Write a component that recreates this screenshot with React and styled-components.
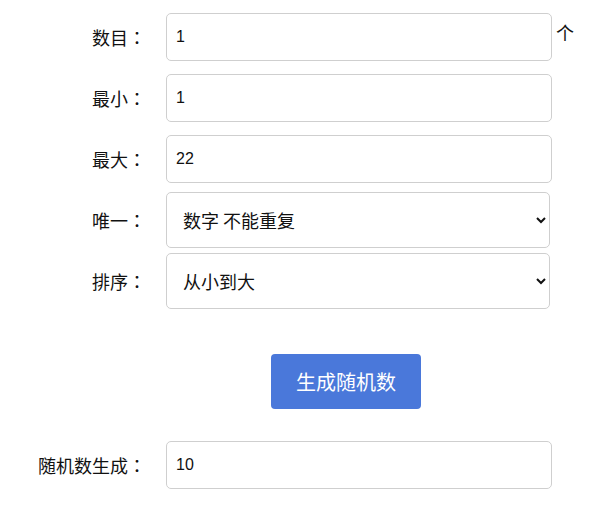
import React, { useState } from 'react';
import styled, { createGlobalStyle } from 'styled-components';

const GlobalStyle = createGlobalStyle`
  body {
    margin: 0;
    background: #fff;
    font-family: "Liberation Sans", "Noto Sans CJK SC", sans-serif;
    color: #111;
  }
`;

// Estilos
const Page = styled.div`
  width: 593px;
  padding-top: 13px;
`;

const Row = styled.div`
  display: flex;
  align-items: center;
  margin-top: ${props => props.$gap || 0}px;
`;

const Label = styled.label`
  width: 146px;
  flex: none;
  margin-right: 20px;
  text-align: right;
  font-family: "Noto Sans CJK TC", "Noto Sans CJK SC", sans-serif;
  font-size: 18px;
  color: #111;
`;

const Input = styled.input`
  box-sizing: border-box;
  width: 386px;
  height: 48px;
  padding: 0 9px;
  border: 1px solid #cfcfcf;
  border-radius: 5px;
  font-family: "Liberation Sans", sans-serif;
  font-size: 16px;
  color: #111;
  outline: none;

  &:focus {
    border-color: #9fb6ea;
  }
`;

const Select = styled.select`
  box-sizing: border-box;
  width: 384px;
  height: 56px;
  padding: 0 12px;
  border: 1px solid #cfcfcf;
  border-radius: 5px;
  background: #fff;
  font-family: "Noto Sans CJK SC", sans-serif;
  font-size: 18px;
  color: #111;
  outline: none;
`;

const Unit = styled.span`
  margin-left: 4px;
  align-self: flex-start;
  margin-top: 6px;
  font-family: "Noto Sans CJK SC", sans-serif;
  font-size: 18px;
  color: #111;
`;

const Button = styled.button`
  width: 150px;
  height: 55px;
  margin-left: 271px;
  border: none;
  border-radius: 4px;
  background: #4a78da;
  color: #fff;
  font-family: "Noto Sans CJK SC", sans-serif;
  font-size: 20px;
  cursor: pointer;

  &:hover {
    background: #3f6bcc;
  }
`;

const App = () => {
  const [count, setCount] = useState('1');
  const [min, setMin] = useState('1');
  const [max, setMax] = useState('22');
  const [unique, setUnique] = useState('no');
  const [order, setOrder] = useState('asc');
  const [result, setResult] = useState('10');

  const generate = () => {
    const n = parseInt(count, 10) || 0;
    const lo = parseInt(min, 10) || 0;
    const hi = parseInt(max, 10) || 0;
    const nums = [];
    let tries = 0;
    while (nums.length < n && tries < 10000) {
      tries++;
      const v = lo + Math.floor(Math.random() * (hi - lo + 1));
      if (unique === 'no' && nums.includes(v)) continue;
      nums.push(v);
    }
    if (order === 'asc') nums.sort((a, b) => a - b);
    if (order === 'desc') nums.sort((a, b) => b - a);
    setResult(nums.join(', '));
  };

  return (
    <Page>
      <GlobalStyle />
      <Row>
        <Label>数目：</Label>
        <Input value={count} onChange={e => setCount(e.target.value)} />
        <Unit>个</Unit>
      </Row>
      <Row $gap={13}>
        <Label>最小：</Label>
        <Input value={min} onChange={e => setMin(e.target.value)} />
      </Row>
      <Row $gap={13}>
        <Label>最大：</Label>
        <Input value={max} onChange={e => setMax(e.target.value)} />
      </Row>
      <Row $gap={9}>
        <Label>唯一：</Label>
        <Select value={unique} onChange={e => setUnique(e.target.value)}>
          <option value="no">数字 不能重复</option>
          <option value="yes">数字 可以重复</option>
        </Select>
      </Row>
      <Row $gap={5}>
        <Label>排序：</Label>
        <Select value={order} onChange={e => setOrder(e.target.value)}>
          <option value="asc">从小到大</option>
          <option value="desc">从大到小</option>
          <option value="none">不排序</option>
        </Select>
      </Row>
      <Row $gap={45}>
        <Button type="button" onClick={generate}>生成随机数</Button>
      </Row>
      <Row $gap={32}>
        <Label>随机数生成：</Label>
        <Input value={result} readOnly />
      </Row>
    </Page>
  );
};

export default App;
